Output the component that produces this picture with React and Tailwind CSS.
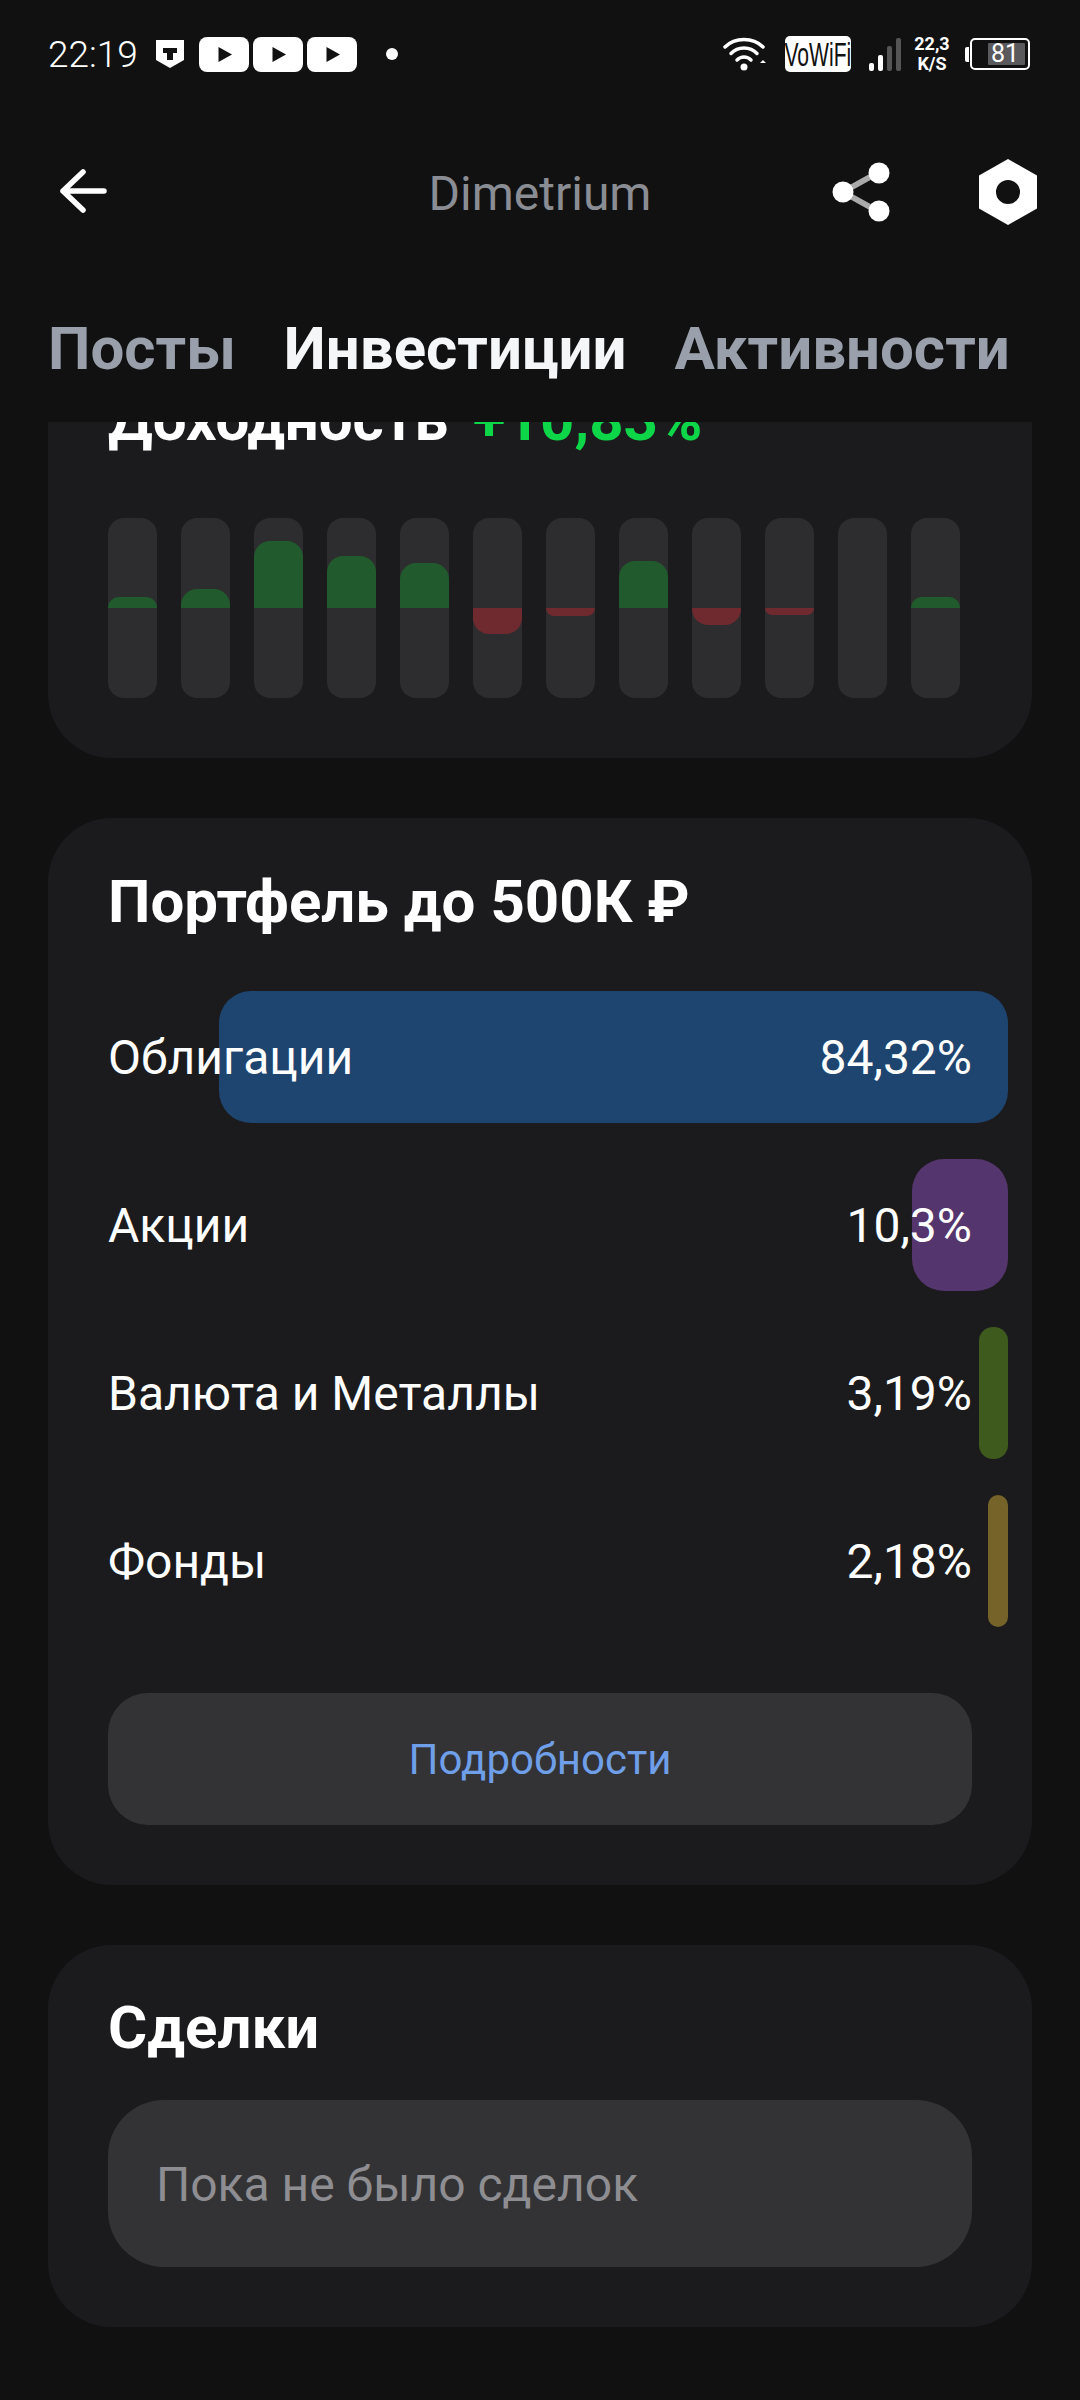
import React from 'react';

const BARS = [11, 19, 67, 52, 45, -26, -8, 47, -17, -7, 0, 11];

const ALLOCATION = [
  { name: 'Облигации', value: '84,32%', bar: 'w-[789px] rounded-[32px] bg-[#1e4470]' },
  { name: 'Акции', value: '10,3%', bar: 'w-[96px] rounded-[32px] bg-[#55356d]' },
  { name: 'Валюта и Металлы', value: '3,19%', bar: 'w-[29px] rounded-[14px] bg-[#3f5a1d]' },
  { name: 'Фонды', value: '2,18%', bar: 'w-[20px] rounded-[10px] bg-[#76632a]' },
];

const YoutubeIcon = () => (
  <svg width="50" height="35" viewBox="0 0 50 35">
    <rect width="50" height="35" rx="8" fill="#fff" />
    <path d="M19.5 10 L33 17.5 L19.5 25 Z" fill="#111" />
  </svg>
);

const StatusBar = () => (
  <div className="h-[108px] flex items-center pl-[48px] text-white">
    <span className="text-[37px] leading-none w-[87px] font-light">22:19</span>
    <svg className="ml-[21px]" width="28" height="28" viewBox="0 0 28 28">
      <path d="M0 0 H28 V20 L14 28 L0 20 Z" fill="#fff" />
      <path d="M7 8 H21 V13 H17 V20 H11 V13 H7 Z" fill="#111" />
    </svg>
    <div className="ml-[15px] flex gap-[4px]">
      <YoutubeIcon />
      <YoutubeIcon />
      <YoutubeIcon />
    </div>
    <div className="ml-[29px] w-[12px] h-[12px] rounded-full bg-white" />
    <svg className="ml-[325px]" width="43" height="34" viewBox="0 0 43 34" fill="none" stroke="#fff" strokeLinecap="round">
      <path d="M2 10 C12 0 30 0 40 10" strokeWidth="3.5" />
      <path d="M8 16.5 C15 9 27 9 34 16.5" strokeWidth="3.5" />
      <path d="M14 23 C18 19 24 19 28 23" strokeWidth="3.5" />
      <circle cx="21" cy="30" r="3.5" fill="#fff" stroke="none" />
      <path d="M37 26 L40 23 L43 26 Z" fill="#fff" stroke="none" />
    </svg>
    <div className="ml-[19px] w-[66px] h-[36px] rounded-[5px] bg-white flex items-center justify-center overflow-hidden">
      <span className="text-[34px] leading-none text-[#111] scale-x-[0.62] whitespace-nowrap font-['Liberation_Sans',sans-serif]">VoWiFi</span>
    </div>
    <svg className="ml-[18px]" width="32" height="33" viewBox="0 0 32 33">
      <rect x="0" y="25" width="5" height="8" rx="2" fill="#fff" />
      <rect x="9" y="17" width="5" height="16" rx="2" fill="#fff" />
      <rect x="18" y="8" width="5" height="25" rx="2" fill="#555" />
      <rect x="27" y="0" width="5" height="33" rx="2" fill="#555" />
    </svg>
    <div className="ml-[12px] w-[38px] flex flex-col items-center text-[18px] leading-[20px] font-bold">
      <span>22,3</span>
      <span>K/S</span>
    </div>
    <div className="ml-[14px] w-[4px] h-[15px] rounded-l-[2px] bg-white" />
    <div className="ml-[1px] w-[60px] h-[32px] rounded-[5px] border-2 border-white p-[3px]">
      <div className="h-full bg-[#5a5a5c] ml-[13px] rounded-[1px] text-[25px] leading-[22px] pl-[3px] text-white">81</div>
    </div>
  </div>
);

const Header = () => (
  <div className="h-[168px] relative flex items-center justify-center pt-[4px]">
    <svg className="absolute left-[58px] top-[58px]" width="50" height="50" viewBox="0 0 50 50" fill="none" stroke="#fff" strokeWidth="5.5" strokeLinecap="round" strokeLinejoin="round">
      <path d="M5 25 H46 M25 6 L5 25 L25 44" />
    </svg>
    <span className="text-[48px] leading-none text-[#8a8d93]">Dimetrium</span>
    <svg className="absolute left-[832px] top-[54px]" width="58" height="60" viewBox="0 0 58 60">
      <path d="M11 30 L47 10 M11 30 L47 50" stroke="#aaa" strokeWidth="6" />
      <circle cx="11" cy="30" r="10.5" fill="#fff" />
      <circle cx="47" cy="11" r="10.5" fill="#fff" />
      <circle cx="47" cy="49" r="10.5" fill="#fff" />
    </svg>
    <svg className="absolute left-[979px] top-[51px]" width="58" height="66" viewBox="0 0 58 66">
      <path fillRule="evenodd" d="M29 0 L58 16.5 V49.5 L29 66 L0 49.5 V16.5 Z M29 21 A12 12 0 1 0 29 45 A12 12 0 1 0 29 21 Z" fill="#fff" />
    </svg>
  </div>
);

const Tabs = () => (
  <div className="h-[146px] flex items-center pl-[48px] gap-[48px] text-[60px] leading-none font-bold">
    <span className="text-[#9aa0ab]">Посты</span>
    <span className="text-[#f5f6f8]">Инвестиции</span>
    <span className="text-[#9aa0ab]">Активности</span>
  </div>
);

const ReturnsCard = () => (
  <div className="-mt-[85px] bg-[#1b1b1d] rounded-[64px] px-[60px] pt-[50px] pb-[60px]">
    <h2 className="h-[66px] text-[60px] leading-[66px] font-bold text-white whitespace-nowrap">
      Доходность <span className="ml-[10px] text-[#0dd648]">+10,83%</span>
    </h2>
    <div className="mt-[65px] flex gap-[24px]">
      {BARS.map((v, i) => (
        <div key={i} className="w-[49px] h-[180px] rounded-[16px] bg-[#2d2d2f] flex flex-col overflow-hidden">
          <div className="h-[90px] flex flex-col justify-end">
            {v > 0 && <div className="bg-[#215a2c] rounded-t-[16px]" style={{ height: v }} />}
          </div>
          <div className="h-[90px]">
            {v < 0 && <div className="bg-[#6e2a2e] rounded-b-[16px]" style={{ height: -v }} />}
          </div>
        </div>
      ))}
    </div>
  </div>
);

const PortfolioCard = () => (
  <div className="mt-[60px] bg-[#1b1b1d] rounded-[64px] px-[60px] pt-[51px] pb-[60px]">
    <h2 className="h-[66px] text-[60px] leading-[66px] font-bold text-white">Портфель до 500К ₽</h2>
    <div className="mt-[56px] flex flex-col gap-[36px]">
      {ALLOCATION.map((row) => (
        <div key={row.name} className="relative h-[132px] pt-[2px] flex items-center justify-between text-[48px] text-white">
          <div className={`absolute top-0 bottom-0 -right-[36px] ${row.bar}`} />
          <span className="relative">{row.name}</span>
          <span className="relative">{row.value}</span>
        </div>
      ))}
    </div>
    <div className="mt-[66px] h-[132px] rounded-[40px] bg-[#333335] flex items-center justify-center text-[42px] text-[#6f9fe8]">
      Подробности
    </div>
  </div>
);

const DealsCard = () => (
  <div className="mt-[60px] bg-[#1b1b1d] rounded-[64px] px-[60px] pt-[50px] pb-[60px]">
    <h2 className="h-[66px] text-[60px] leading-[66px] font-bold text-white">Сделки</h2>
    <div className="mt-[39px] h-[167px] pt-[2px] rounded-[56px] bg-[#333335] flex items-center pl-[48px] text-[48px] text-[#8e8e92]">
      Пока не было сделок
    </div>
  </div>
);

export default function App() {
  return (
    <div className="w-[1080px] h-[2400px] bg-[#111112] overflow-hidden flex flex-col font-['Roboto',sans-serif]">
      <StatusBar />
      <Header />
      <Tabs />
      <div className="flex-1 overflow-hidden px-[48px]">
        <ReturnsCard />
        <PortfolioCard />
        <DealsCard />
      </div>
    </div>
  );
}
